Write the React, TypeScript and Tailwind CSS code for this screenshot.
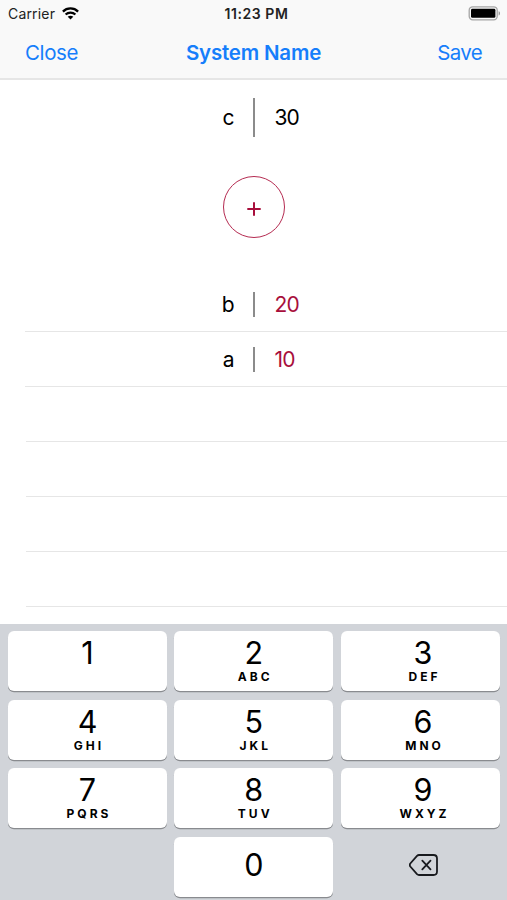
type Entry = { name: string; value: string };

const entries: Entry[] = [
  { name: 'b', value: '20' },
  { name: 'a', value: '10' },
];

const keys = [
  ['1', ''],
  ['2', 'ABC'],
  ['3', 'DEF'],
  ['4', 'GHI'],
  ['5', 'JKL'],
  ['6', 'MNO'],
  ['7', 'PQRS'],
  ['8', 'TUV'],
  ['9', 'WXYZ'],
];

function StatusBar() {
  return (
    <div className="grid h-[27px] grid-cols-3 items-center pl-2 pr-[6px] text-[14px] text-[#222]">
      <div className="flex items-center gap-[7px]">
        <span className="tracking-[0.18px]">Carrier</span>
        <svg width="17" height="13" viewBox="0 0 17 13" fill="none" stroke="#000" strokeWidth="2.3">
          <path d="M0.9 4.6C5.1 0.4 11.9 0.4 16.1 4.6" />
          <path d="M3.6 7.5C6.4 4.9 10.6 4.9 13.4 7.5" />
          <path d="M8.5 12.5L5.7 9.7C7.3 8.3 9.7 8.3 11.3 9.7Z" fill="#000" stroke="none" />
        </svg>
      </div>
      <span className="whitespace-nowrap pb-px pl-[4px] text-center text-[14px] font-semibold tracking-[0.55px]">11:23 PM</span>
      <svg className="justify-self-end" width="33" height="15" viewBox="0 0 33 15">
        <rect x="1.2" y="0.8" width="28" height="13" rx="3.5" fill="#f9f9f9" stroke="#a5a5a5" strokeWidth="1.3" />
        <rect x="3" y="2.8" width="24.4" height="9" rx="1.4" fill="#000" />
        <path d="M30.6 5.2C32.5 5.6 32.5 9 30.6 9.4Z" fill="#999" />
      </svg>
    </div>
  );
}

function Row({ name, value, tall = false }: Entry & { tall?: boolean }) {
  return (
    <div className="grid grid-cols-[234.5px_39.5px_1fr] items-center text-[21px] leading-[26px]">
      <span className={tall ? 'text-right' : 'pt-[2px] text-right'}>{name}</span>
      <span className={tall ? 'ml-[18.5px] h-[39px] w-[2px] bg-[#8b8b8b]' : 'ml-[18.5px] h-[25px] w-[2px] bg-[#8b8b8b]'} />
      <span className={tall ? 'pl-[0.5px] tracking-[-0.9px]' : 'pl-[0.5px] pt-[2px] tracking-[-0.9px] text-[#a80f3c]'}>{value}</span>
    </div>
  );
}

function Key({ digit, letters, shifted = false }: { digit: string; letters?: string; shifted?: boolean }) {
  return (
    <button
      className={`flex h-[60px] flex-col items-center rounded-[6px] bg-white pt-[6px] shadow-[0_1.3px_0_#898b8f] ${shifted ? 'pl-[6px]' : ''}`}
    >
      <span className={letters === undefined ? 'mt-[6px] text-[30.5px] leading-[32px]' : 'text-[30.5px] leading-[32px]'}>{digit}</span>
      <span className="mt-[1px] pl-[3px] text-[12px] font-bold leading-[14px] tracking-[3px]">{letters}</span>
    </button>
  );
}

export default function App() {
  return (
    <main className="flex h-[900px] w-[507px] flex-col overflow-hidden bg-white font-['Inter','Liberation_Sans',sans-serif] text-black">
      <header className="h-[80px] shrink-0 border-b-2 border-[#e6e6e6] bg-[#f9f9f9]">
        <StatusBar />
        <nav className="grid h-[51px] grid-cols-3 items-center px-[25px] pt-[2px] text-[20.5px] text-[#167efb]">
          <button className="text-left tracking-[-0.4px]">Close</button>
          <h1 className="justify-self-center whitespace-nowrap font-semibold tracking-[-0.2px]">System Name</h1>
          <button className="text-right tracking-[-0.7px]">Save</button>
        </nav>
      </header>

      <section className="flex h-[197px] shrink-0 flex-col pt-[18px]">
        <Row name="c" value="30" tall />
        <button className="mt-[39px] flex size-[62px] items-center justify-center self-center rounded-full border-[1.5px] border-[#b52b51]">
          <svg className="mt-[4px]" width="14" height="14" viewBox="0 0 14 14" stroke="#a80f3c" strokeWidth="2">
            <path d="M7 0.3V13.7M0.3 7H13.7" />
          </svg>
        </button>
      </section>

      <section className="h-[347px] shrink-0 overflow-hidden">
        {entries.map((entry) => (
          <div key={entry.name} className="h-[55px]">
            <div className="flex h-[54px] flex-col justify-center">
              <Row {...entry} />
            </div>
            <hr className="ml-[25px] border-[#e6e6e6]" />
          </div>
        ))}
        {[0, 1, 2, 3].map((line) => (
          <div key={line} className="ml-[26px] h-[55px] border-b border-[#e6e6e6]" />
        ))}
      </section>

      <section className="grid h-[276px] shrink-0 grid-cols-3 content-start gap-x-[7.3px] gap-y-[8.6px] bg-[#d1d4d9] pl-[8px] pr-[7.5px] pt-[7px]">
        {keys.map(([digit, letters], index) => (
          <Key key={digit} digit={digit} letters={letters} shifted={index % 3 === 2} />
        ))}
        <span />
        <Key digit="0" />
        <button className="flex h-[60px] items-center justify-center pb-[3px] pl-[7px]" aria-label="Delete">
          <svg width="29" height="22" viewBox="0 0 29 22" fill="none" stroke="#181a1e" strokeWidth="1.8" strokeLinejoin="round" strokeLinecap="round">
            <path d="M10 1H24.5Q28 1 28 4.5V17.5Q28 21 24.5 21H10Q8.9 21 8 20.1L1.3 12.5Q0.2 11 1.3 9.5L8 1.9Q8.9 1 10 1Z" />
            <path d="M13.3 6.7L21.5 15.3M21.5 6.7L13.3 15.3" />
          </svg>
        </button>
      </section>
    </main>
  );
}
